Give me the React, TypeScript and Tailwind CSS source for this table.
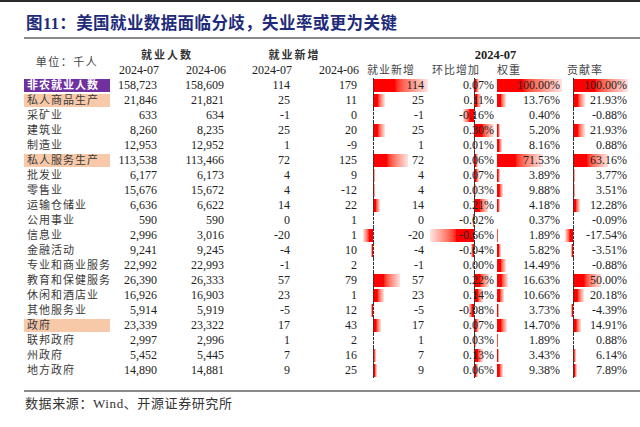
import React from 'react';

// Row data: label, employment 07/06, new jobs 07/06, then the four bar columns
interface Row {
  label: string;
  a: string;
  b: string;
  c: string;
  d: string;
  e: number;
  f: number;
  g: number;
  h: number;
  tone?: 'purple' | 'peach';
}

const rows: Row[] = [
  { label: '非农就业人数', a: '158,723', b: '158,609', c: '114', d: '179', e: 114, f: 0.07, g: 100.0, h: 100.0, tone: 'purple' },
  { label: '私人商品生产', a: '21,846', b: '21,821', c: '25', d: '11', e: 25, f: 0.11, g: 13.76, h: 21.93, tone: 'peach' },
  { label: '采矿业', a: '633', b: '634', c: '-1', d: '0', e: -1, f: -0.16, g: 0.4, h: -0.88 },
  { label: '建筑业', a: '8,260', b: '8,235', c: '25', d: '20', e: 25, f: 0.3, g: 5.2, h: 21.93 },
  { label: '制造业', a: '12,953', b: '12,952', c: '1', d: '-9', e: 1, f: 0.01, g: 8.16, h: 0.88 },
  { label: '私人服务生产', a: '113,538', b: '113,466', c: '72', d: '125', e: 72, f: 0.06, g: 71.53, h: 63.16, tone: 'peach' },
  { label: '批发业', a: '6,177', b: '6,173', c: '4', d: '9', e: 4, f: 0.07, g: 3.89, h: 3.77 },
  { label: '零售业', a: '15,676', b: '15,672', c: '4', d: '-12', e: 4, f: 0.03, g: 9.88, h: 3.51 },
  { label: '运输仓储业', a: '6,636', b: '6,622', c: '14', d: '22', e: 14, f: 0.21, g: 4.18, h: 12.28 },
  { label: '公用事业', a: '590', b: '590', c: '0', d: '1', e: 0, f: -0.02, g: 0.37, h: -0.09 },
  { label: '信息业', a: '2,996', b: '3,016', c: '-20', d: '1', e: -20, f: -0.66, g: 1.89, h: -17.54 },
  { label: '金融活动', a: '9,241', b: '9,245', c: '-4', d: '10', e: -4, f: -0.04, g: 5.82, h: -3.51 },
  { label: '专业和商业服务', a: '22,992', b: '22,993', c: '-1', d: '2', e: -1, f: 0.0, g: 14.49, h: -0.88 },
  { label: '教育和保健服务', a: '26,390', b: '26,333', c: '57', d: '79', e: 57, f: 0.22, g: 16.63, h: 50.0 },
  { label: '休闲和酒店业', a: '16,926', b: '16,903', c: '23', d: '1', e: 23, f: 0.14, g: 10.66, h: 20.18 },
  { label: '其他服务业', a: '5,914', b: '5,919', c: '-5', d: '12', e: -5, f: -0.08, g: 3.73, h: -4.39 },
  { label: '政府', a: '23,339', b: '23,322', c: '17', d: '43', e: 17, f: 0.07, g: 14.7, h: 14.91, tone: 'peach' },
  { label: '联邦政府', a: '2,997', b: '2,996', c: '1', d: '2', e: 1, f: 0.03, g: 1.89, h: 0.88 },
  { label: '州政府', a: '5,452', b: '5,445', c: '7', d: '16', e: 7, f: 0.13, g: 3.43, h: 6.14 },
  { label: '地方政府', a: '14,890', b: '14,881', c: '9', d: '25', e: 9, f: 0.06, g: 9.38, h: 7.89 },
];

const pct = (v: number) => `${v.toFixed(2)}%`;

// Excel-style gradient data bar, drawn from the axis
const Bar = ({ value, axis, posScale, negScale }: { value: number; axis: number; posScale: number; negScale: number }) => {
  const w = value >= 0 ? value * posScale : -value * negScale;
  if (w < 0.4) return null;
  return (
    <div
      className={`absolute top-[1px] bottom-[1px] ${
        value >= 0
          ? 'bg-linear-to-r from-[#ff0000] from-40% to-[#ffe4e4]'
          : 'bg-linear-to-l from-[#ff0000] from-40% to-[#ffe4e4]'
      }`}
      style={{ left: value >= 0 ? axis : axis - w, width: w }}
    />
  );
};

const cjk = "font-['Liberation_Serif','Noto_Sans_CJK_SC',serif]";

export default function App() {
  return (
    <div className={`w-[640px] h-[427px] bg-white overflow-hidden ${cjk} text-[#222]`}>
      <div className="h-[2px] bg-[#2a2a2a]" />

      {/* title */}
      <div className="pl-[26px] pt-[12px] h-[34px] text-[16.5px] leading-[20px] font-bold text-[#1e2a7a] tracking-[0.4px] whitespace-nowrap">
        图11：美国就业数据面临分歧，失业率或更为关键
      </div>
      <div className="ml-[24px] mt-[1px] h-[2px] bg-[#8a8a8a]" />

      {/* table header */}
      <div className="flex mt-[8px] ml-[24px]">
        <div className="w-[86px] h-[31px] flex items-center justify-center text-[11px] tracking-[1.5px] text-[#444]">
          单位：千人
        </div>
        <div className="flex flex-col">
          <div className="flex h-[16px] leading-[16px] items-center">
            <div className="w-[114px] text-center text-[11px] font-bold tracking-[2px] text-[#333]">就业人数</div>
            <div className="w-[133px] text-center pl-[8px] text-[11px] font-bold tracking-[2px] text-[#333]">就业新增</div>
            <div className="w-[273px] text-center pl-[4px] text-[12.5px] font-bold">2024-07</div>
          </div>
          <div className="flex h-[15px] leading-[15px] text-[12px] whitespace-nowrap">
            <div className="w-[49px] text-right">2024-07</div>
            <div className="w-[67px] text-right">2024-06</div>
            <div className="w-[66px] text-right">2024-07</div>
            <div className="w-[67px] text-right">2024-06</div>
            <div className="w-[71px] pl-[8px] text-[11px] tracking-[1px] text-[#444]">就业新增</div>
            <div className="w-[66px] pl-[2px] text-[11px] tracking-[1px] text-[#444]">环比增加</div>
            <div className="w-[69px] pl-[1px] text-[11px] tracking-[1px] text-[#444]">权重</div>
            <div className="w-[65px] pl-[2px] text-[11px] tracking-[1px] text-[#444]">贡献率</div>
          </div>
        </div>
      </div>

      {/* table body */}
      <div className="ml-[24px] flex flex-col">
        {rows.map((r) => (
          <div key={r.label} className="flex h-[15px] leading-[15px] text-[12px] whitespace-nowrap">
            <div className="w-[86px] relative">
              {r.tone && (
                <div
                  className={`absolute left-0 right-0 top-[0.5px] bottom-[1px] ${
                    r.tone === 'purple' ? 'bg-[#7030a0]' : 'bg-[#f7c9a9]'
                  }`}
                />
              )}
              <div
                className={`relative pl-[3px] text-[11px] tracking-[1px] ${
                  r.tone === 'purple' ? 'text-white font-bold' : 'text-[#3a3a3a]'
                }`}
              >
                {r.label}
              </div>
            </div>
            <div className="w-[47px] text-right">{r.a}</div>
            <div className="w-[67px] text-right">{r.b}</div>
            <div className="w-[66px] text-right">{r.c}</div>
            <div className="w-[67px] text-right">{r.d}</div>

            <div className="w-[73px] relative">
              <Bar value={r.e} axis={16} posScale={0.48} negScale={0.5} />
              <div className="absolute left-[16px] top-0 bottom-0 border-l border-dashed border-[#333]" />
              <div className="relative text-right pr-[6px]">{r.e}</div>
            </div>
            <div className="w-[66px] relative">
              <Bar value={r.f} axis={44} posScale={67} negScale={67} />
              <div className="absolute left-[44px] top-0 bottom-0 border-l border-dashed border-[#333]" />
              <div className="relative text-right pr-[2px]">{pct(r.f)}</div>
            </div>
            <div className="w-[69px] relative">
              <Bar value={r.g} axis={1} posScale={0.65} negScale={0.65} />
              <div className="relative text-right pr-[5px]">{pct(r.g)}</div>
            </div>
            <div className="w-[65px] relative">
              <Bar value={r.h} axis={8} posScale={0.55} negScale={0.48} />
              <div className="absolute left-[8px] top-0 bottom-0 border-l border-dashed border-[#333]" />
              <div className="relative text-right pr-[3px]">{pct(r.h)}</div>
            </div>
          </div>
        ))}
      </div>

      <div className="ml-[24px] mt-[12px] h-[2px] bg-[#8a8a8a]" />
      <div className="pl-[25px] mt-[4px] text-[13px] leading-[16px] tracking-[0.6px] text-[#333]">
        数据来源：Wind、开源证券研究所
      </div>
    </div>
  );
}
